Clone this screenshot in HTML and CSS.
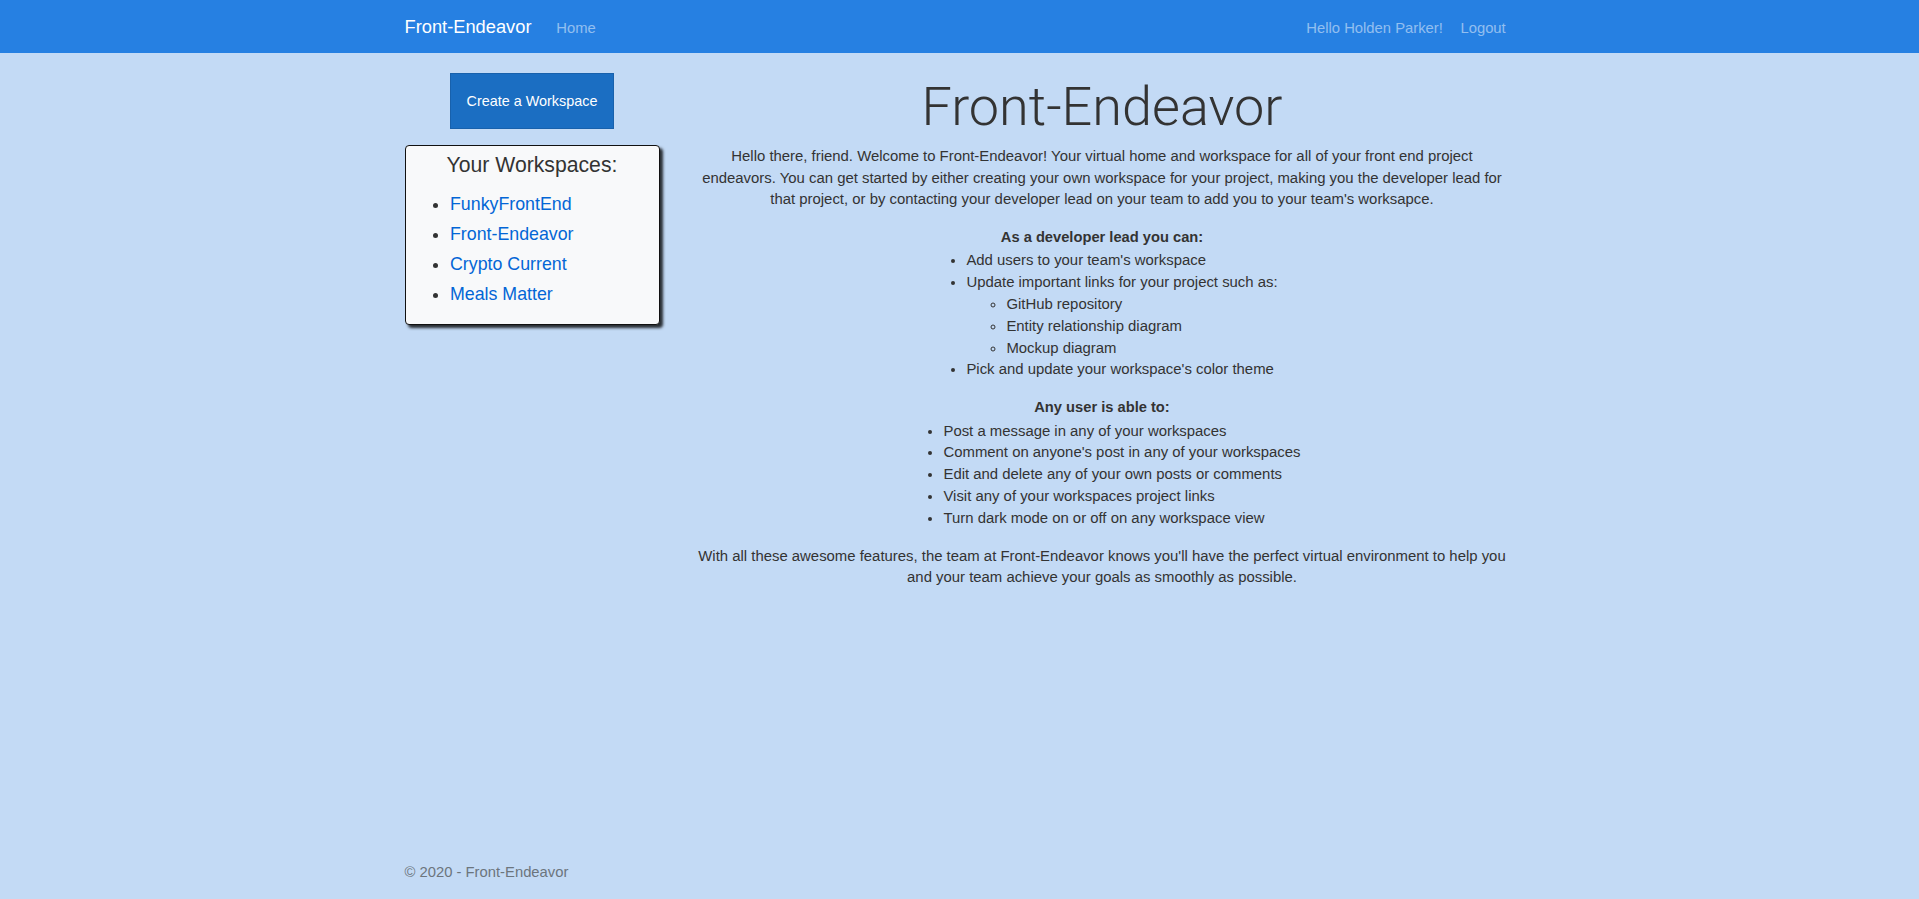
FILE: index.html
```html
<!DOCTYPE html>
<html lang="en">
<head>
<meta charset="utf-8">
<title>Front-Endeavor</title>
<link rel="stylesheet" href="styles.css">
</head>
<body>
<header class="navbar">
  <div class="container nav-inner">
    <a class="brand" href="#">Front-Endeavor</a>
    <a class="nav-link" href="#">Home</a>
    <div class="nav-right">
      <a class="nav-link" href="#">Hello Holden Parker!</a>
      <a class="nav-link" href="#">Logout</a>
    </div>
  </div>
</header>
<main class="container main">
  <aside class="sidebar">
    <button class="btn-create" type="button">Create a Workspace</button>
    <div class="ws-card">
      <h4 class="ws-title">Your Workspaces:</h4>
      <ul class="ws-list">
        <li><a href="#">FunkyFrontEnd</a></li>
        <li><a href="#">Front-Endeavor</a></li>
        <li><a href="#">Crypto Current</a></li>
        <li><a href="#">Meals Matter</a></li>
      </ul>
    </div>
  </aside>
  <section class="content">
    <h1 class="hero">Front-Endeavor</h1>
    <p class="intro">Hello there, friend. Welcome to Front-Endeavor! Your virtual home and workspace for all of your front end project<br>endeavors. You can get started by either creating your own workspace for your project, making you the developer lead for<br>that project, or by contacting your developer lead on your team to add you to your team's worksapce.</p>
    <div class="list-title">As a developer lead you can:</div>
    <ul class="feature-list">
      <li>Add users to your team's workspace</li>
      <li>Update important links for your project such as:
        <ul class="sub-list">
          <li>GitHub repository</li>
          <li>Entity relationship diagram</li>
          <li>Mockup diagram</li>
        </ul>
      </li>
      <li>Pick and update your workspace's color theme</li>
    </ul>
    <div class="list-title">Any user is able to:</div>
    <ul class="feature-list">
      <li>Post a message in any of your workspaces</li>
      <li>Comment on anyone's post in any of your workspaces</li>
      <li>Edit and delete any of your own posts or comments</li>
      <li>Visit any of your workspaces project links</li>
      <li>Turn dark mode on or off on any workspace view</li>
    </ul>
    <p class="outro">With all these awesome features, the team at Front-Endeavor knows you'll have the perfect virtual environment to help you<br>and your team achieve your goals as smoothly as possible.</p>
  </section>
</main>
<footer class="container footer">&copy; 2020 - Front-Endeavor</footer>
</body>
</html>
```

FILE: styles.css
```css
* {
  box-sizing: border-box;
}

html,
body {
  margin: 0;
}

body {
  font-family: "Liberation Sans", Arial, sans-serif;
  font-size: 14.9px;
  line-height: 21.8px;
  color: #333;
  background: #c3daf5;
  min-height: 100vh;
  display: flex;
  flex-direction: column;
}

a {
  text-decoration: none;
}

.container {
  width: 1110px;
  margin: 0 auto;
}

/* Navbar */
.navbar {
  background: #2680e2;
  height: 53px;
  flex: none;
}

.nav-inner {
  display: flex;
  align-items: baseline;
  padding-top: 12.8px;
}

.brand {
  color: #fff;
  font-size: 18.3px;
  line-height: 27.45px;
  margin-right: 16px;
}

.nav-link {
  color: rgba(255, 255, 255, 0.5);
  font-size: 14.8px;
  padding: 0 8.8px;
}

.nav-right {
  margin-left: auto;
  display: flex;
  align-items: baseline;
}

/* Main */
.main {
  display: flex;
  gap: 30px;
  flex: 1 0 auto;
}

.sidebar {
  width: 255px;
  flex: none;
  display: flex;
  flex-direction: column;
  align-items: center;
}

.btn-create {
  margin-top: 20px;
  height: 56px;
  padding: 0 16px;
  background: #1b6ec2;
  border: 1px solid #1861ac;
  border-radius: 0;
  color: #fff;
  font-family: inherit;
  font-size: 14.4px;
  cursor: pointer;
}

.ws-card {
  align-self: stretch;
  margin-top: 16px;
  background: #f8f9fa;
  border: 1px solid #111;
  border-radius: 4px;
  box-shadow: 3px 3px 3px rgba(0, 0, 0, 0.8);
  padding-top: 6px;
}

.ws-title {
  margin: 0;
  font-size: 21.2px;
  line-height: 25.4px;
  font-weight: normal;
  text-align: center;
  color: #333;
}

.ws-list {
  margin: 12px 0 15px;
  padding-left: 44.5px;
  font-size: 17.8px;
  line-height: 30px;
}

.ws-list a {
  color: #0366d6;
}

/* Content */
.content {
  flex: 1;
  text-align: center;
}

.hero {
  font-family: Roboto, "Liberation Sans", sans-serif;
  font-weight: 300;
  font-size: 54px;
  line-height: 64.8px;
  margin: 22px 0 0;
  color: #333;
}

.intro {
  margin: 6px 0 16px;
}

.list-title {
  font-weight: bold;
  font-size: 14.7px;
}

.feature-list {
  width: fit-content;
  margin: 1.5px auto 16px;
  padding-left: 40px;
  text-align: left;
}

.sub-list {
  list-style: circle;
  margin: 0;
  padding-left: 40px;
}

.outro {
  margin: 0;
}

/* Footer */
.footer {
  flex: none;
  height: 54px;
  line-height: 54px;
  font-size: 14.8px;
  color: #6c757d;
}
```
